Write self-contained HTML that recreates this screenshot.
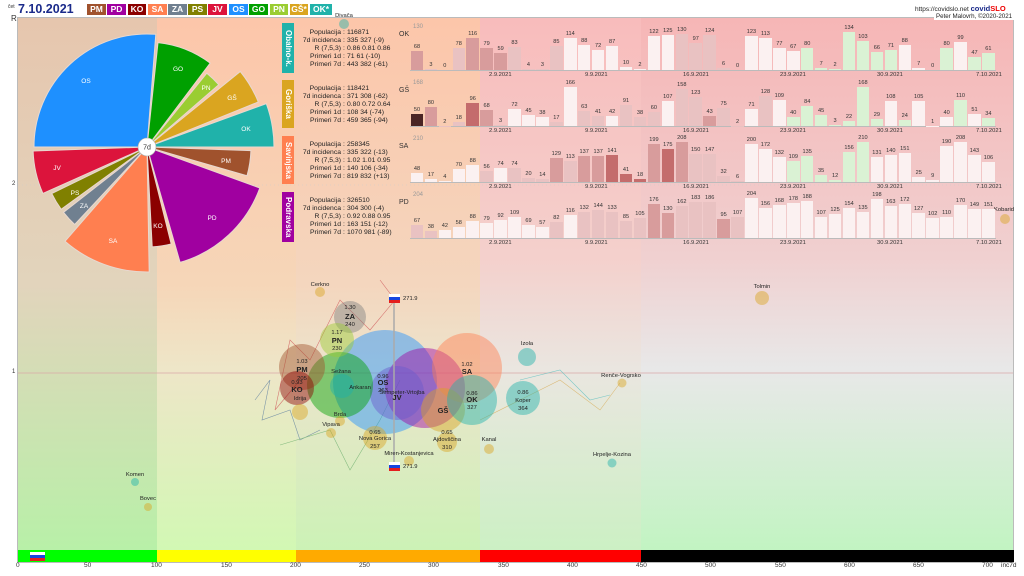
<!DOCTYPE html>
<html><head><meta charset="utf-8">
<style>
*{margin:0;padding:0;box-sizing:border-box}
body{width:1024px;height:576px;background:#fff;position:relative;overflow:hidden;font-family:"Liberation Sans",sans-serif;color:#222}
svg{position:absolute;left:0;top:0}
.abs{position:absolute}
.leg{position:absolute;top:4px;height:11px;color:#fff;font-size:8.5px;font-weight:bold;text-align:center;line-height:11px}
.tag{position:absolute;left:282px;width:12px;color:#fff;font-weight:bold;font-size:8px;writing-mode:vertical-rl;text-align:center;line-height:12px}
.info{position:absolute;left:290px;width:160px;font-size:6.8px;line-height:8px;white-space:pre;font-family:"Liberation Sans",sans-serif}
.info div{display:flex}
.info b{font-weight:normal;width:51px;text-align:right;display:inline-block}
.info i{font-style:normal;width:6px;text-align:center}
.row{position:absolute;left:410px;width:586px;display:flex;align-items:flex-end;border-bottom:1px solid #bbb}
.row>div{width:13.95px;flex:none;display:flex;flex-direction:column;align-items:center}
.row span{font-size:5.6px;line-height:7px;color:#333}
.row>div>div{width:12.5px;height:calc(var(--v)*var(--k));min-height:0}
.a>div{background:#c46c6c}.b>div{background:#d89c9c}.c>div{background:#e9c2c2}.w>div{background:#fbf1f1}.g>div{background:#daf2d4}.d>div{background:#4a2424}
.dt{position:absolute;font-size:5.8px;color:#333}
.lab{position:absolute;font-size:7px;color:#333}
.gl{position:absolute;font-size:6px;color:#999}
.ax{position:absolute;top:562px;font-size:6.5px;color:#333}
</style></head><body>
<svg width="1024" height="576" viewBox="0 0 1024 576">
<defs>
<linearGradient id="g1" x1="0" y1="0" x2="0" y2="1"><stop offset="0" stop-color="#e6c6ae"/><stop offset=".5" stop-color="#e2d4bc"/><stop offset="1" stop-color="#b8f0a8"/></linearGradient>
<linearGradient id="g2" x1="0" y1="0" x2="0" y2="1"><stop offset="0" stop-color="#fcc6aa"/><stop offset=".5" stop-color="#f6d6b8"/><stop offset=".66" stop-color="#eee6c8"/><stop offset="1" stop-color="#d2f8b4"/></linearGradient>
<linearGradient id="g3" x1="0" y1="0" x2="0" y2="1"><stop offset="0" stop-color="#fcc6aa"/><stop offset=".5" stop-color="#f4d6be"/><stop offset=".66" stop-color="#ece4cc"/><stop offset="1" stop-color="#ccf2b6"/></linearGradient>
<linearGradient id="g4" x1="0" y1="0" x2="0" y2="1"><stop offset="0" stop-color="#f8bcbc"/><stop offset=".45" stop-color="#f4d0cc"/><stop offset=".66" stop-color="#eae6e0"/><stop offset="1" stop-color="#ccf0c4"/></linearGradient>
<linearGradient id="g5" x1="0" y1="0" x2="0" y2="1"><stop offset="0" stop-color="#f6b6b6"/><stop offset=".45" stop-color="#f0d0d0"/><stop offset=".66" stop-color="#e8e8e8"/><stop offset="1" stop-color="#c2f4c2"/></linearGradient>
</defs>
<rect x="18" y="18" width="139" height="532" fill="url(#g1)"/>
<rect x="157" y="18" width="139" height="532" fill="url(#g2)"/>
<rect x="296" y="18" width="184" height="532" fill="url(#g3)"/>
<rect x="480" y="18" width="161" height="532" fill="url(#g4)"/>
<rect x="641" y="18" width="373" height="532" fill="url(#g5)"/>
<rect x="17.5" y="17.5" width="996" height="545" fill="none" stroke="#bbb"/>
<line x1="18" y1="373" x2="1013" y2="373" stroke="#d8a8a8" stroke-width=".7"/>
<line x1="18" y1="185" x2="1013" y2="185" stroke="#ccc" stroke-width=".5" stroke-dasharray="1 3"/>
<rect x="18" y="550" width="139" height="12" fill="#00ff00"/>
<rect x="157" y="550" width="139" height="12" fill="#ffff00"/>
<rect x="296" y="550" width="184" height="12" fill="#ffaa00"/>
<rect x="480" y="550" width="161" height="12" fill="#ff0000"/>
<rect x="641" y="550" width="373" height="12" fill="#000"/>
<rect x="30" y="552" width="15" height="3" fill="#fff"/><rect x="30" y="555" width="15" height="3" fill="#1646e0"/><rect x="30" y="558" width="15" height="3" fill="#e41e1e"/>
<g stroke="#e8d8d0" stroke-width="1" font-size="7" fill="#fff">
<path d="M147,147 L34,147 A113,113 0 0 1 155.8,34.3 Z" fill="#1e90ff"/>
<path d="M147,147 L158,42.6 A105,105 0 0 1 210.2,63.1 Z" fill="#00a000"/>
<path d="M147,147 L206.8,73.2 A95,95 0 0 1 218.7,84.7 Z" fill="#9acd32"/>
<path d="M147,147 L240.3,71.5 A120,120 0 0 1 258.3,102 Z" fill="#daa520"/>
<path d="M147,147 L266.3,103.6 A127,127 0 0 1 274,147 Z" fill="#20b2aa"/>
<path d="M147,147 L250.9,150.6 A104,104 0 0 1 247,175.7 Z" fill="#a0522d"/>
<path d="M147,147 L259.8,188 A120,120 0 0 1 180.1,262.4 Z" fill="#a000a0"/>
<path d="M147,147 L171.2,244 A100,100 0 0 1 152.2,246.9 Z" fill="#8b0000"/>
<path d="M147,147 L149.2,272 A125,125 0 0 1 65,241.3 Z" fill="#ff7f50"/>
<path d="M147,147 L74.7,224.5 A106,106 0 0 1 63.5,212.3 Z" fill="#708090"/>
<path d="M147,147 L61.2,209.3 A106,106 0 0 1 51.7,193.5 Z" fill="#808000"/>
<path d="M147,147 L42.9,193.4 A114,114 0 0 1 33.1,151 Z" fill="#dc143c"/>
</g>
<g font-size="6.5" fill="#fff" text-anchor="middle">
<text x="86" y="83">OS</text><text x="178" y="71">GO</text><text x="206" y="90">PN</text><text x="232" y="100">GŠ</text><text x="246" y="131">OK</text><text x="226" y="163">PM</text><text x="212" y="220">PD</text><text x="158" y="228">KO</text><text x="113" y="243">SA</text><text x="84" y="208">ZA</text><text x="75" y="195">PS</text><text x="57" y="170">JV</text>
</g>
<circle cx="147" cy="147" r="9" fill="#fff" stroke="#aaa" stroke-width=".6"/>
<text x="147" y="149.5" font-size="7" fill="#333" text-anchor="middle">7d</text>
<g fill="none" stroke-width=".6" opacity=".8">
<polyline points="380,280 395,300 370,330 340,300 310,360 290,340 275,410 300,380" stroke="#d06060"/>
<polyline points="255,400 270,380 262,420 290,410 300,440 320,430" stroke="#6080a0"/>
<polyline points="280,445 330,430 350,470 380,420 400,380" stroke="#70b070"/>
<polyline points="480,420 530,395 560,380 600,410 620,383" stroke="#d8b060"/>
<polyline points="520,380 560,370 590,400 610,395" stroke="#60c0c0"/>
</g>
<g fill-opacity=".45">
<circle cx="385" cy="382" r="52" fill="#1e90ff"/>
<circle cx="425" cy="388" r="40" fill="#a000a0"/>
<circle cx="467" cy="368" r="35" fill="#ff7f50"/>
<circle cx="397" cy="393" r="27" fill="#6a5acd"/>
<circle cx="443" cy="410" r="22" fill="#daa520"/>
<circle cx="472" cy="400" r="25" fill="#20b2aa"/>
<circle cx="340" cy="385" r="33" fill="#00a000"/>
<circle cx="342" cy="386" r="12" fill="#20b2aa"/>
<circle cx="302" cy="367" r="23" fill="#a0522d"/>
<circle cx="297" cy="388" r="17" fill="#8b0000"/>
<circle cx="350" cy="317" r="16" fill="#808080"/>
<circle cx="337" cy="340" r="17" fill="#9acd32"/>
<circle cx="527" cy="357" r="9" fill="#20b2aa"/>
<circle cx="523" cy="398" r="17" fill="#20b2aa"/>
<circle cx="320" cy="292" r="5" fill="#daa520"/>
<circle cx="300" cy="412" r="8" fill="#daa520"/>
<circle cx="331" cy="433" r="5" fill="#daa520"/>
<circle cx="340" cy="421" r="5" fill="#daa520"/>
<circle cx="375" cy="438" r="12" fill="#daa520"/>
<circle cx="447" cy="442" r="10" fill="#daa520"/>
<circle cx="489" cy="449" r="5" fill="#daa520"/>
<circle cx="409" cy="461" r="5" fill="#daa520"/>
<circle cx="762" cy="298" r="7" fill="#daa520"/>
<circle cx="622" cy="383" r="4.5" fill="#daa520"/>
<circle cx="612" cy="463" r="4.5" fill="#20b2aa"/>
<circle cx="135" cy="482" r="4" fill="#20b2aa"/>
<circle cx="148" cy="507" r="4" fill="#daa520"/>
<circle cx="1005" cy="219" r="5" fill="#daa520"/>
<circle cx="344" cy="24" r="5" fill="#20b2aa"/>
</g>
<line x1="394" y1="298" x2="394" y2="466" stroke="#aaa" stroke-width="1.5"/>
<rect x="389" y="294" width="11" height="3" fill="#fff"/><rect x="389" y="297" width="11" height="3" fill="#1646e0"/><rect x="389" y="300" width="11" height="3" fill="#e41e1e"/>
<rect x="389" y="462" width="11" height="3" fill="#fff"/><rect x="389" y="465" width="11" height="3" fill="#1646e0"/><rect x="389" y="468" width="11" height="3" fill="#e41e1e"/>
<g font-size="5.8" fill="#222" text-anchor="middle">
<text x="403" y="300" text-anchor="start">271.9</text><text x="403" y="468" text-anchor="start">271.9</text>
<text x="320" y="286">Cerkno</text><text x="527" y="345">Izola</text><text x="762" y="288">Tolmin</text>
<text x="621" y="377">Renče-Vogrsko</text><text x="612" y="456">Hrpelje-Kozina</text><text x="135" y="476">Komen</text><text x="148" y="500">Bovec</text>
<text x="1004" y="211">Kobarid</text><text x="344" y="17">Divača</text><text x="489" y="441">Kanal</text><text x="409" y="455">Miren-Kostanjevica</text>
<text x="375" y="440">Nova Gorica</text><text x="375" y="448">257</text><text x="375" y="434">0.65</text>
<text x="447" y="441">Ajdovščina</text><text x="447" y="449">310</text><text x="447" y="434">0.65</text>
<text x="331" y="426">Vipava</text><text x="340" y="416">Brda</text><text x="341" y="373">Sežana</text><text x="360" y="389">Ankaran</text><text x="300" y="400">Idrija</text>
<text x="523" y="394">0.86</text><text x="523" y="402">Koper</text><text x="523" y="410">364</text>
<text x="402" y="394">Šempeter-Vrtojba</text>
<text x="350" y="309">1.30</text><text x="350" y="326" font-size="5.8">240</text>
<text x="337" y="334">1.17</text><text x="337" y="350">230</text>
<text x="302" y="363">1.03</text><text x="302" y="380">205</text>
<text x="297" y="384">0.93</text>
<text x="383" y="378">0.96</text><text x="383" y="392">263</text>
<text x="467" y="366">1.02</text><text x="472" y="395">0.86</text><text x="472" y="409">327</text>
</g>
<g font-size="7.5" font-weight="bold" fill="#222" text-anchor="middle">
<text x="350" y="319">ZA</text><text x="337" y="343">PN</text><text x="302" y="372">PM</text><text x="297" y="392">KO</text>
<text x="383" y="385">OS</text><text x="467" y="374">SA</text><text x="472" y="402">OK</text><text x="443" y="413">GŠ</text><text x="397" y="400">JV</text>
</g>
</svg>

<div class="abs" style="left:8px;top:4px;font-size:5px;color:#333">čet</div>
<div class="abs" style="left:18px;top:2px;font-size:12.5px;font-weight:bold;color:#1a2a8a">7.10.2021</div>
<div class="leg" style="left:87px;width:19px;background:#a0522d">PM</div>
<div class="leg" style="left:107px;width:19px;background:#a000a0">PD</div>
<div class="leg" style="left:128px;width:18px;background:#8b0000">KO</div>
<div class="leg" style="left:148px;width:19px;background:#ff7f50">SA</div>
<div class="leg" style="left:168px;width:19px;background:#708090">ZA</div>
<div class="leg" style="left:188px;width:19px;background:#808000">PS</div>
<div class="leg" style="left:208px;width:19px;background:#dc143c">JV</div>
<div class="leg" style="left:229px;width:19px;background:#1e90ff">OS</div>
<div class="leg" style="left:249px;width:19px;background:#00a000">GO</div>
<div class="leg" style="left:270px;width:18px;background:#9acd32">PN</div>
<div class="leg" style="left:290px;width:18px;background:#daa520">GŠ*</div>
<div class="leg" style="left:310px;width:22px;background:#20b2aa">OK*</div>
<div class="abs" style="left:915px;top:4px;font-size:6.5px;color:#222">https://covidslo.net <b style="color:#1a2a8a;font-size:7.5px">covid<span style="color:#e00">SLO</span></b></div>
<div class="abs" style="left:934px;top:13px;font-size:6.2px;color:#222;background:#fff;padding:0 2px">Peter Malovrh, ©2020-2021</div>
<div class="abs" style="left:11px;top:14px;font-size:8px;color:#333">R</div>
<div class="abs" style="left:12px;top:181px;font-size:6px;color:#333">2</div>
<div class="abs" style="left:12px;top:369px;font-size:6px;color:#333">1</div>

<div class="tag" style="top:23px;height:50px;background:#20b2aa">Obalno-k.</div>
<div class="tag" style="top:80px;height:48px;background:#daa520">Goriška</div>
<div class="tag" style="top:136px;height:48px;background:#ff7f50">Savinjska</div>
<div class="tag" style="top:192px;height:50px;background:#a000a0">Podravska</div>

<div class="info" style="top:29px"><div><b>Populacija</b><i>:</i>116871</div><div><b>7d incidenca</b><i>:</i>335 327 (-9)</div><div><b>R (7,5,3)</b><i>:</i>0.86 0.81 0.86</div><div><b>Primeri 1d</b><i>:</i>71 61 (-10)</div><div><b>Primeri 7d</b><i>:</i>443 382 (-61)</div></div>
<div class="info" style="top:85px"><div><b>Populacija</b><i>:</i>118421</div><div><b>7d incidenca</b><i>:</i>371 308 (-62)</div><div><b>R (7,5,3)</b><i>:</i>0.80 0.72 0.64</div><div><b>Primeri 1d</b><i>:</i>108 34 (-74)</div><div><b>Primeri 7d</b><i>:</i>459 365 (-94)</div></div>
<div class="info" style="top:141px"><div><b>Populacija</b><i>:</i>258345</div><div><b>7d incidenca</b><i>:</i>335 322 (-13)</div><div><b>R (7,5,3)</b><i>:</i>1.02 1.01 0.95</div><div><b>Primeri 1d</b><i>:</i>140 106 (-34)</div><div><b>Primeri 7d</b><i>:</i>819 832 (+13)</div></div>
<div class="info" style="top:197px"><div><b>Populacija</b><i>:</i>326510</div><div><b>7d incidenca</b><i>:</i>304 300 (-4)</div><div><b>R (7,5,3)</b><i>:</i>0.92 0.88 0.95</div><div><b>Primeri 1d</b><i>:</i>163 151 (-12)</div><div><b>Primeri 7d</b><i>:</i>1070 981 (-89)</div></div>

<div class="lab" style="left:399px;top:31px">OK</div><div class="gl" style="left:413px;top:24px">130</div>
<div class="lab" style="left:399px;top:87px">GŠ</div><div class="gl" style="left:413px;top:80px">168</div>
<div class="lab" style="left:399px;top:143px">SA</div><div class="gl" style="left:413px;top:136px">210</div>
<div class="lab" style="left:399px;top:199px">PD</div><div class="gl" style="left:413px;top:192px">204</div>

<div class="row" style="top:20px;height:51px;--k:.28px">
<div class="b" style="--v:68"><span>68</span><div></div></div><div class="c" style="--v:3"><span>3</span><div></div></div><div class="c" style="--v:0"><span>0</span><div></div></div><div class="c" style="--v:78"><span>78</span><div></div></div><div class="b" style="--v:116"><span>116</span><div></div></div><div class="b" style="--v:79"><span>79</span><div></div></div><div class="b" style="--v:59"><span>59</span><div></div></div><div class="c" style="--v:83"><span>83</span><div></div></div><div class="c" style="--v:4"><span>4</span><div></div></div><div class="c" style="--v:3"><span>3</span><div></div></div>
<div class="c" style="--v:85"><span>85</span><div></div></div><div class="w" style="--v:114"><span>114</span><div></div></div><div class="w" style="--v:88"><span>88</span><div></div></div><div class="w" style="--v:72"><span>72</span><div></div></div><div class="w" style="--v:87"><span>87</span><div></div></div><div class="w" style="--v:10"><span>10</span><div></div></div><div class="w" style="--v:2"><span>2</span><div></div></div><div class="w" style="--v:122"><span>122</span><div></div></div><div class="w" style="--v:125"><span>125</span><div></div></div><div class="c" style="--v:130"><span>130</span><div></div></div>
<div class="c" style="--v:97"><span>97</span><div></div></div><div class="c" style="--v:124"><span>124</span><div></div></div><div class="c" style="--v:6"><span>6</span><div></div></div><div class="c" style="--v:0"><span>0</span><div></div></div><div class="w" style="--v:123"><span>123</span><div></div></div><div class="w" style="--v:113"><span>113</span><div></div></div><div class="w" style="--v:77"><span>77</span><div></div></div><div class="w" style="--v:67"><span>67</span><div></div></div><div class="g" style="--v:80"><span>80</span><div></div></div><div class="g" style="--v:7"><span>7</span><div></div></div>
<div class="g" style="--v:2"><span>2</span><div></div></div><div class="g" style="--v:134"><span>134</span><div></div></div><div class="g" style="--v:103"><span>103</span><div></div></div><div class="g" style="--v:66"><span>66</span><div></div></div><div class="g" style="--v:71"><span>71</span><div></div></div><div class="w" style="--v:88"><span>88</span><div></div></div><div class="w" style="--v:7"><span>7</span><div></div></div><div class="w" style="--v:0"><span>0</span><div></div></div><div class="g" style="--v:80"><span>80</span><div></div></div><div class="w" style="--v:99"><span>99</span><div></div></div>
<div class="g" style="--v:47"><span>47</span><div></div></div><div class="g" style="--v:61"><span>61</span><div></div></div>
</div>

<div class="row" style="top:76px;height:51px;--k:.235px">
<div class="d" style="--v:50"><span>50</span><div></div></div><div class="b" style="--v:80"><span>80</span><div></div></div><div class="c" style="--v:2"><span>2</span><div></div></div><div class="c" style="--v:18"><span>18</span><div></div></div><div class="a" style="--v:96"><span>96</span><div></div></div><div class="b" style="--v:68"><span>68</span><div></div></div><div class="c" style="--v:3"><span>3</span><div></div></div><div class="w" style="--v:72"><span>72</span><div></div></div><div class="w" style="--v:45"><span>45</span><div></div></div><div class="w" style="--v:38"><span>38</span><div></div></div>
<div class="c" style="--v:17"><span>17</span><div></div></div><div class="w" style="--v:166"><span>166</span><div></div></div><div class="c" style="--v:63"><span>63</span><div></div></div><div class="c" style="--v:41"><span>41</span><div></div></div><div class="w" style="--v:42"><span>42</span><div></div></div><div class="c" style="--v:91"><span>91</span><div></div></div><div class="c" style="--v:38"><span>38</span><div></div></div><div class="c" style="--v:60"><span>60</span><div></div></div><div class="w" style="--v:107"><span>107</span><div></div></div><div class="c" style="--v:158"><span>158</span><div></div></div>
<div class="c" style="--v:123"><span>123</span><div></div></div><div class="b" style="--v:43"><span>43</span><div></div></div><div class="c" style="--v:75"><span>75</span><div></div></div><div class="c" style="--v:2"><span>2</span><div></div></div><div class="w" style="--v:71"><span>71</span><div></div></div><div class="c" style="--v:128"><span>128</span><div></div></div><div class="w" style="--v:109"><span>109</span><div></div></div><div class="g" style="--v:40"><span>40</span><div></div></div><div class="g" style="--v:84"><span>84</span><div></div></div><div class="g" style="--v:45"><span>45</span><div></div></div>
<div class="g" style="--v:3"><span>3</span><div></div></div><div class="g" style="--v:22"><span>22</span><div></div></div><div class="g" style="--v:168"><span>168</span><div></div></div><div class="g" style="--v:29"><span>29</span><div></div></div><div class="w" style="--v:108"><span>108</span><div></div></div><div class="g" style="--v:24"><span>24</span><div></div></div><div class="w" style="--v:105"><span>105</span><div></div></div><div class="w" style="--v:1"><span>1</span><div></div></div><div class="w" style="--v:40"><span>40</span><div></div></div><div class="g" style="--v:110"><span>110</span><div></div></div>
<div class="w" style="--v:51"><span>51</span><div></div></div><div class="g" style="--v:34"><span>34</span><div></div></div>
</div>

<div class="row" style="top:132px;height:51px;--k:.19px">
<div class="w" style="--v:48"><span>48</span><div></div></div><div class="w" style="--v:17"><span>17</span><div></div></div><div class="w" style="--v:4"><span>4</span><div></div></div><div class="w" style="--v:70"><span>70</span><div></div></div><div class="w" style="--v:88"><span>88</span><div></div></div><div class="c" style="--v:56"><span>56</span><div></div></div><div class="w" style="--v:74"><span>74</span><div></div></div><div class="c" style="--v:74"><span>74</span><div></div></div><div class="c" style="--v:20"><span>20</span><div></div></div><div class="c" style="--v:14"><span>14</span><div></div></div>
<div class="b" style="--v:129"><span>129</span><div></div></div><div class="c" style="--v:113"><span>113</span><div></div></div><div class="b" style="--v:137"><span>137</span><div></div></div><div class="b" style="--v:137"><span>137</span><div></div></div><div class="a" style="--v:141"><span>141</span><div></div></div><div class="a" style="--v:41"><span>41</span><div></div></div><div class="a" style="--v:18"><span>18</span><div></div></div><div class="b" style="--v:199"><span>199</span><div></div></div><div class="a" style="--v:175"><span>175</span><div></div></div><div class="b" style="--v:208"><span>208</span><div></div></div>
<div class="c" style="--v:150"><span>150</span><div></div></div><div class="c" style="--v:147"><span>147</span><div></div></div><div class="c" style="--v:32"><span>32</span><div></div></div><div class="c" style="--v:6"><span>6</span><div></div></div><div class="w" style="--v:200"><span>200</span><div></div></div><div class="w" style="--v:172"><span>172</span><div></div></div><div class="w" style="--v:132"><span>132</span><div></div></div><div class="g" style="--v:109"><span>109</span><div></div></div><div class="g" style="--v:135"><span>135</span><div></div></div><div class="g" style="--v:35"><span>35</span><div></div></div>
<div class="g" style="--v:12"><span>12</span><div></div></div><div class="g" style="--v:156"><span>156</span><div></div></div><div class="g" style="--v:210"><span>210</span><div></div></div><div class="w" style="--v:131"><span>131</span><div></div></div><div class="w" style="--v:140"><span>140</span><div></div></div><div class="w" style="--v:151"><span>151</span><div></div></div><div class="w" style="--v:25"><span>25</span><div></div></div><div class="w" style="--v:9"><span>9</span><div></div></div><div class="w" style="--v:190"><span>190</span><div></div></div><div class="w" style="--v:208"><span>208</span><div></div></div>
<div class="w" style="--v:143"><span>143</span><div></div></div><div class="w" style="--v:106"><span>106</span><div></div></div>
</div>

<div class="row" style="top:188px;height:51px;--k:.195px">
<div class="c" style="--v:67"><span>67</span><div></div></div><div class="c" style="--v:38"><span>38</span><div></div></div><div class="w" style="--v:42"><span>42</span><div></div></div><div class="w" style="--v:58"><span>58</span><div></div></div><div class="w" style="--v:88"><span>88</span><div></div></div><div class="w" style="--v:79"><span>79</span><div></div></div><div class="w" style="--v:92"><span>92</span><div></div></div><div class="w" style="--v:109"><span>109</span><div></div></div><div class="w" style="--v:69"><span>69</span><div></div></div><div class="w" style="--v:57"><span>57</span><div></div></div>
<div class="c" style="--v:82"><span>82</span><div></div></div><div class="w" style="--v:116"><span>116</span><div></div></div><div class="c" style="--v:132"><span>132</span><div></div></div><div class="c" style="--v:144"><span>144</span><div></div></div><div class="c" style="--v:133"><span>133</span><div></div></div><div class="c" style="--v:85"><span>85</span><div></div></div><div class="c" style="--v:105"><span>105</span><div></div></div><div class="b" style="--v:176"><span>176</span><div></div></div><div class="b" style="--v:130"><span>130</span><div></div></div><div class="c" style="--v:162"><span>162</span><div></div></div>
<div class="c" style="--v:183"><span>183</span><div></div></div><div class="c" style="--v:186"><span>186</span><div></div></div><div class="b" style="--v:95"><span>95</span><div></div></div><div class="c" style="--v:107"><span>107</span><div></div></div><div class="w" style="--v:204"><span>204</span><div></div></div><div class="w" style="--v:156"><span>156</span><div></div></div><div class="w" style="--v:168"><span>168</span><div></div></div><div class="w" style="--v:178"><span>178</span><div></div></div><div class="w" style="--v:188"><span>188</span><div></div></div><div class="w" style="--v:107"><span>107</span><div></div></div>
<div class="w" style="--v:125"><span>125</span><div></div></div><div class="w" style="--v:154"><span>154</span><div></div></div><div class="w" style="--v:135"><span>135</span><div></div></div><div class="w" style="--v:198"><span>198</span><div></div></div><div class="w" style="--v:163"><span>163</span><div></div></div><div class="w" style="--v:172"><span>172</span><div></div></div><div class="w" style="--v:127"><span>127</span><div></div></div><div class="w" style="--v:102"><span>102</span><div></div></div><div class="w" style="--v:110"><span>110</span><div></div></div><div class="w" style="--v:170"><span>170</span><div></div></div>
<div class="w" style="--v:149"><span>149</span><div></div></div><div class="w" style="--v:151"><span>151</span><div></div></div>
</div>

<div class="dt" style="left:489px;top:72px">2.9.2021</div><div class="dt" style="left:585px;top:72px">9.9.2021</div><div class="dt" style="left:683px;top:72px">16.9.2021</div><div class="dt" style="left:780px;top:72px">23.9.2021</div><div class="dt" style="left:877px;top:72px">30.9.2021</div><div class="dt" style="left:976px;top:72px">7.10.2021</div>
<div class="dt" style="left:489px;top:128px">2.9.2021</div><div class="dt" style="left:585px;top:128px">9.9.2021</div><div class="dt" style="left:683px;top:128px">16.9.2021</div><div class="dt" style="left:780px;top:128px">23.9.2021</div><div class="dt" style="left:877px;top:128px">30.9.2021</div><div class="dt" style="left:976px;top:128px">7.10.2021</div>
<div class="dt" style="left:489px;top:184px">2.9.2021</div><div class="dt" style="left:585px;top:184px">9.9.2021</div><div class="dt" style="left:683px;top:184px">16.9.2021</div><div class="dt" style="left:780px;top:184px">23.9.2021</div><div class="dt" style="left:877px;top:184px">30.9.2021</div><div class="dt" style="left:976px;top:184px">7.10.2021</div>
<div class="dt" style="left:489px;top:240px">2.9.2021</div><div class="dt" style="left:585px;top:240px">9.9.2021</div><div class="dt" style="left:683px;top:240px">16.9.2021</div><div class="dt" style="left:780px;top:240px">23.9.2021</div><div class="dt" style="left:877px;top:240px">30.9.2021</div><div class="dt" style="left:976px;top:240px">7.10.2021</div>

<div class="ax" style="left:16px">0</div><div class="ax" style="left:84px">50</div><div class="ax" style="left:151px">100</div><div class="ax" style="left:221px">150</div><div class="ax" style="left:290px">200</div><div class="ax" style="left:359px">250</div><div class="ax" style="left:428px">300</div><div class="ax" style="left:498px">350</div><div class="ax" style="left:567px">400</div><div class="ax" style="left:636px">450</div><div class="ax" style="left:705px">500</div><div class="ax" style="left:775px">550</div><div class="ax" style="left:844px">600</div><div class="ax" style="left:913px">650</div><div class="ax" style="left:982px">700</div><div class="ax" style="left:1001px">inc7d</div>
</body></html>
